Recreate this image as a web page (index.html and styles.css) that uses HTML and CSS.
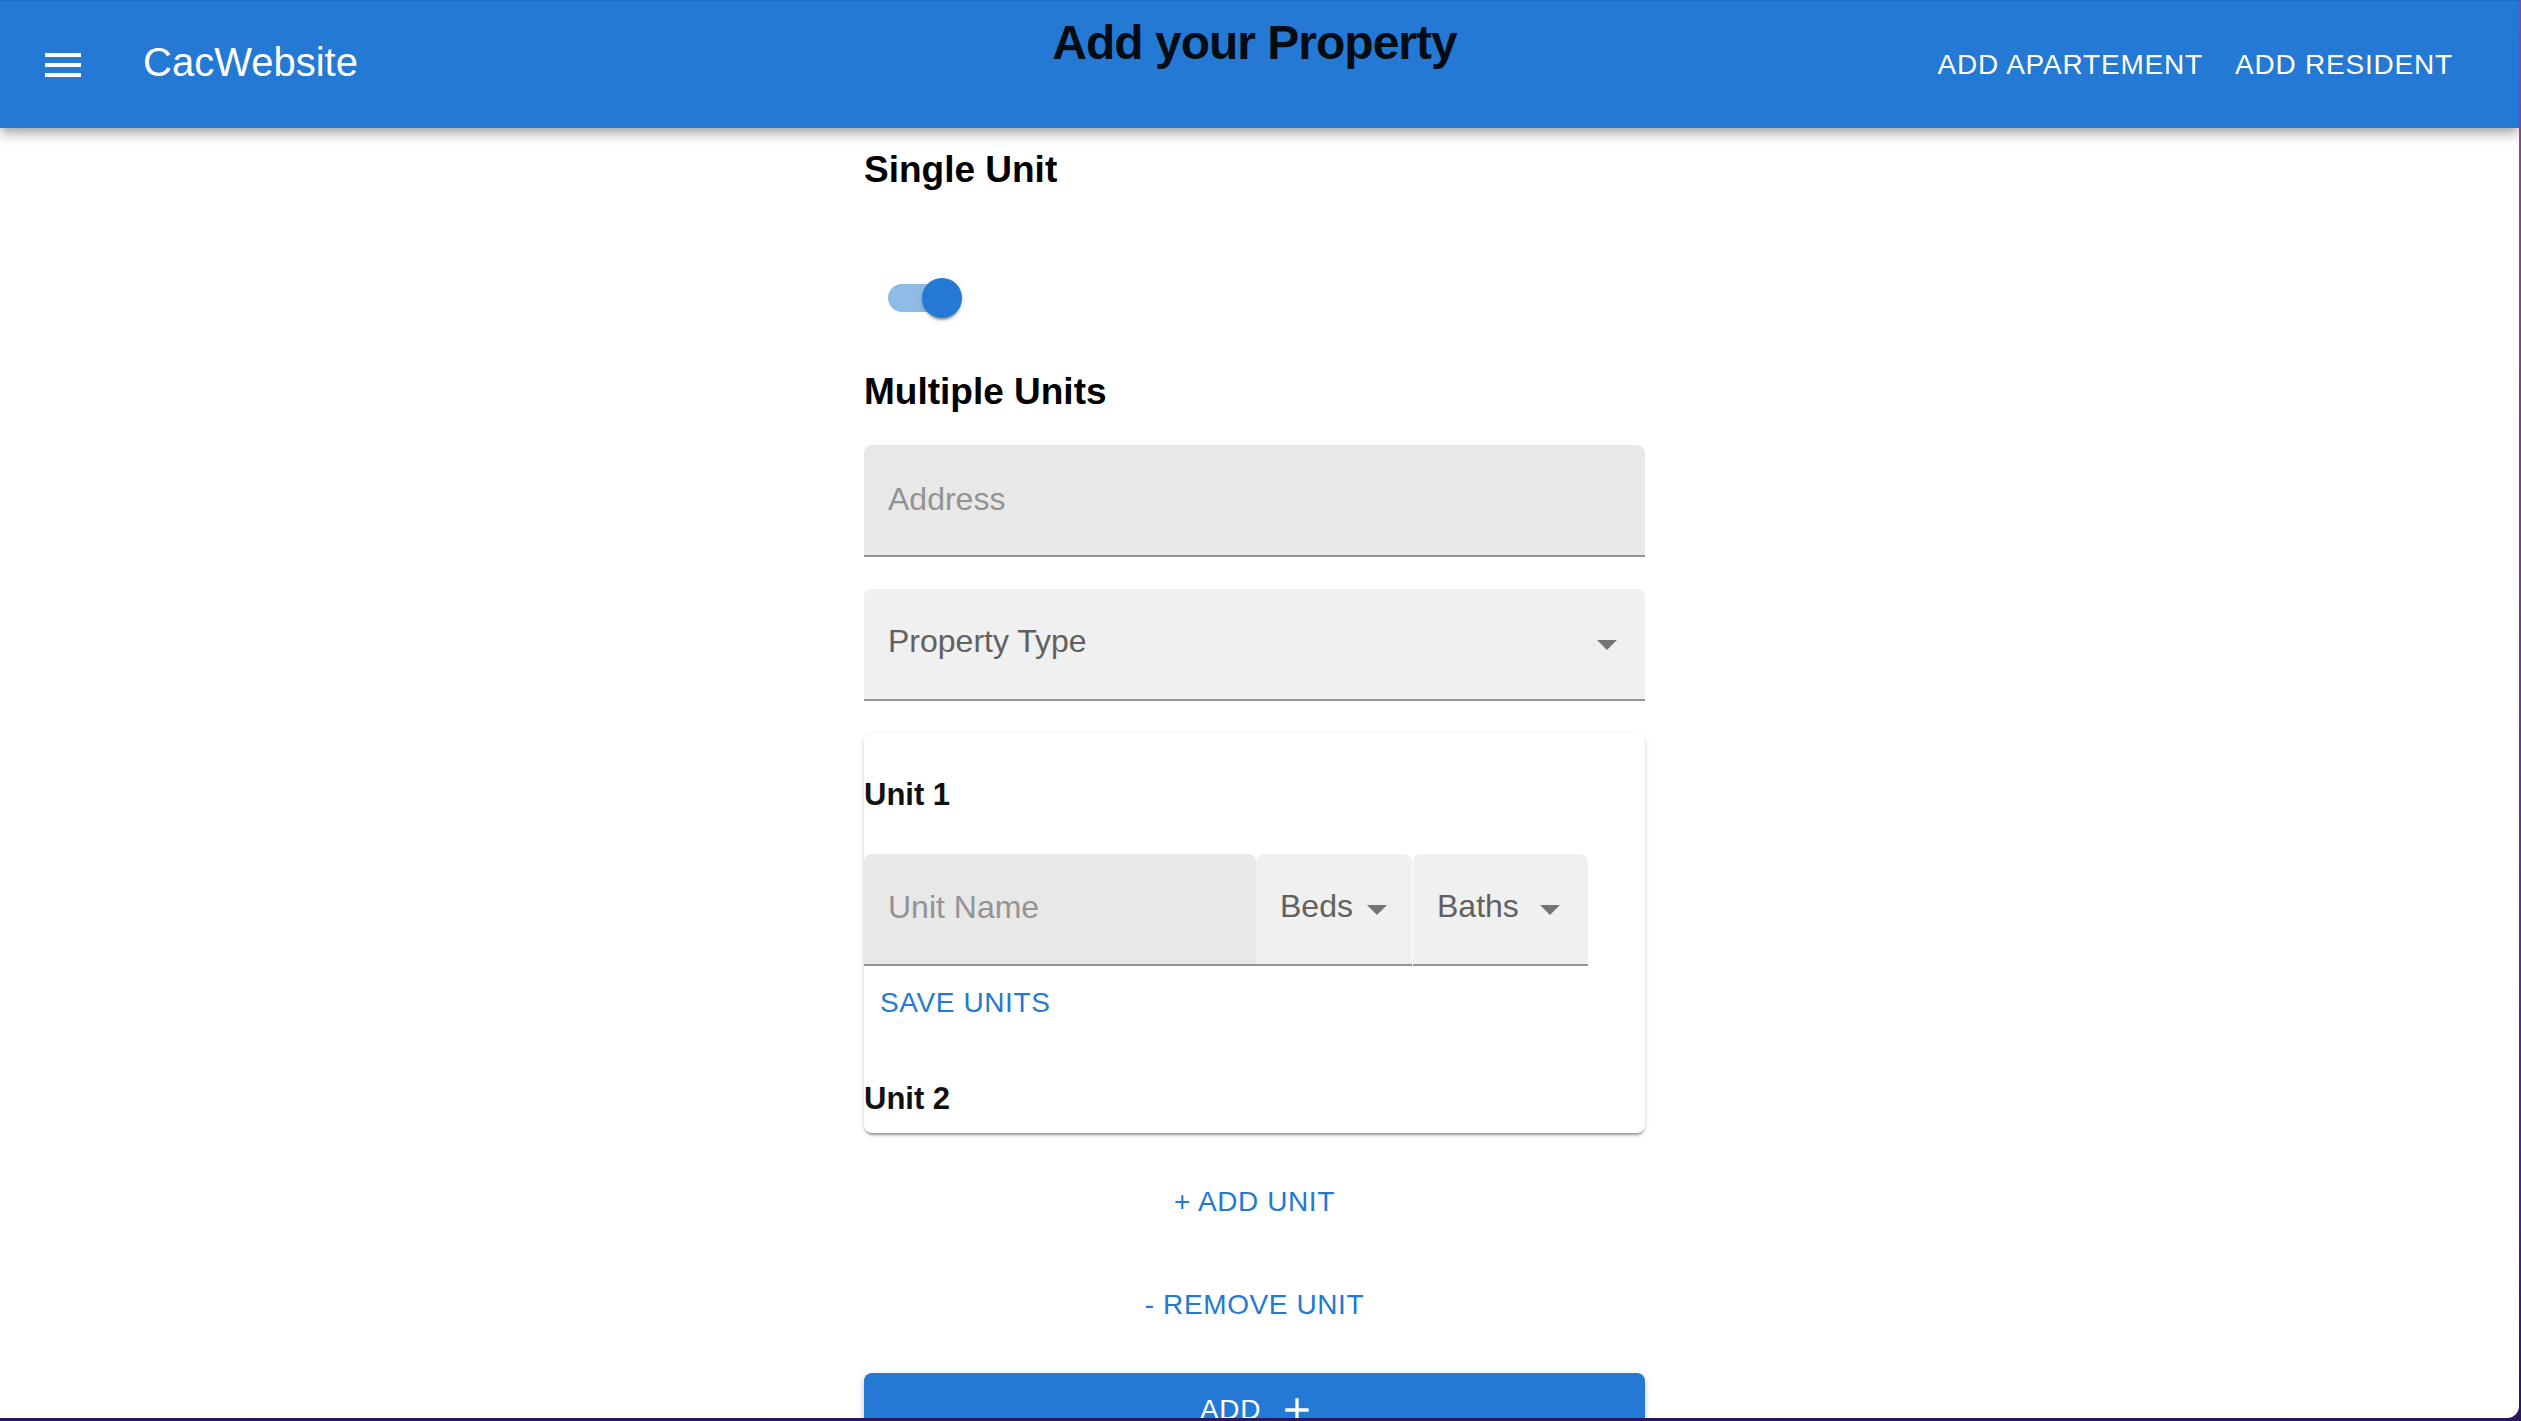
FILE: index.html
```html
<!DOCTYPE html>
<html lang="en">
<head>
<meta charset="utf-8">
<title>CacWebsite - Add your Property</title>
<link rel="stylesheet" href="styles.css">
</head>
<body>
<div class="window">
  <header class="appbar">
    <div class="toolbar">
      <button class="icon-btn" aria-label="menu">
        <svg viewBox="0 0 24 24" width="48" height="48"><path d="M3 18h18v-2H3v2zm0-5h18v-2H3v2zm0-7v2h18V6H3z" fill="#ffffff"/></svg>
      </button>
      <div class="brand">CacWebsite</div>
      <div class="spacer"></div>
      <nav class="nav">
        <a class="nav-btn">ADD APARTEMENT</a>
        <a class="nav-btn">ADD RESIDENT</a>
      </nav>
    </div>
    <h1 class="page-title">Add your Property</h1>
  </header>

  <main class="content">
    <div class="column">
      <h2 class="heading heading-single">Single Unit</h2>
      <div class="switch">
        <span class="switch-track"></span>
        <span class="switch-thumb"></span>
      </div>
      <h2 class="heading heading-multi">Multiple Units</h2>

      <div class="field field-input"><span class="placeholder">Address</span></div>
      <div class="field field-select">
        <span class="select-label">Property Type</span>
        <svg class="arrow" viewBox="0 0 24 24" width="48" height="48"><path d="M7 10l5 5 5-5z" fill="#757575"/></svg>
      </div>

      <section class="card">
        <h3 class="unit-title unit-first">Unit 1</h3>
        <div class="unit-row">
          <div class="cell cell-name"><span class="placeholder">Unit Name</span></div>
          <div class="cell cell-select cell-beds">
            <span class="select-label">Beds</span>
            <svg class="arrow" viewBox="0 0 24 24" width="48" height="48"><path d="M7 10l5 5 5-5z" fill="#757575"/></svg>
          </div>
          <div class="cell cell-select cell-baths">
            <span class="select-label">Baths</span>
            <svg class="arrow" viewBox="0 0 24 24" width="48" height="48"><path d="M7 10l5 5 5-5z" fill="#757575"/></svg>
          </div>
        </div>
        <button class="text-btn save-btn">SAVE UNITS</button>
        <h3 class="unit-title unit-second">Unit 2</h3>
      </section>

      <button class="text-btn center-btn add-unit">+ ADD UNIT</button>
      <button class="text-btn center-btn remove-unit">- REMOVE UNIT</button>

      <button class="add-btn">ADD
        <svg viewBox="0 0 24 24" width="40" height="40"><path d="M19 13h-6v6h-2v-6H5v-2h6V5h2v6h6v2z" fill="#ffffff"/></svg>
      </button>
    </div>
  </main>
</div>
</body>
</html>
```

FILE: styles.css
```css
html, body {
  margin: 0;
  padding: 0;
  width: 100%;
  height: 100%;
  overflow: hidden;
}

body {
  background: linear-gradient(180deg, #8e4a86 0%, #7a3a8c 45%, #4b1e9c 85%, #2a1660 100%);
  font-family: "Liberation Sans", Arial, Helvetica, sans-serif;
}

.window {
  width: 2519px;
  height: 1418px;
  overflow: hidden;
  background: #ffffff;
  border-bottom-right-radius: 12px;
}

/* ---------- App bar ---------- */
.appbar {
  position: relative;
  height: 128px;
  box-sizing: border-box;
  background: #2379d3;
  border-top: 1px solid #1c6dc4;
  box-shadow: 0 4px 8px -2px rgba(0,0,0,0.2), 0 8px 10px 0 rgba(0,0,0,0.14), 0 2px 20px 0 rgba(0,0,0,0.12);
  z-index: 2;
}

.toolbar {
  height: 127px;
  display: flex;
  align-items: center;
  padding: 0 50px 0 15px;
}

.icon-btn {
  display: flex;
  padding: 24px;
  margin: 0 32px 0 0;
  border: 0;
  background: none;
}

.brand {
  color: #ffffff;
  font-size: 40px;
  line-height: 64px;
  font-weight: 400;
  margin-bottom: 6px;
}

.spacer {
  flex: 1;
}

.nav {
  display: flex;
}

.nav-btn {
  color: #ffffff;
  font-size: 28px;
  line-height: 49px;
  letter-spacing: 0.8px;
  padding: 12px 16px;
}

.page-title {
  position: absolute;
  left: 0;
  top: 18px;
  width: 2509px;
  margin: 0;
  text-align: center;
  font-size: 48px;
  line-height: 48px;
  font-weight: 700;
  letter-spacing: -1px;
  color: rgba(0,0,0,0.92);
}

/* ---------- Content ---------- */
.content {
  width: 2509px;
}

.column {
  width: 781px;
  margin: 0 auto;
  display: flex;
  flex-direction: column;
}

.heading {
  margin: 0;
  font-size: 37px;
  line-height: 43px;
  font-weight: 700;
  color: #000000;
}

.heading-single {
  margin-top: 20px;
}

.heading-multi {
  margin-top: 34px;
}

.switch {
  position: relative;
  width: 116px;
  height: 76px;
  margin-top: 69px;
}

.switch-track {
  display: block;
  width: 68px;
  height: 28px;
  margin: 24px;
  border-radius: 14px;
  background: #8fbbe9;
}

.switch-thumb {
  position: absolute;
  left: 58px;
  top: 18px;
  width: 40px;
  height: 40px;
  border-radius: 50%;
  background: #2379d3;
  box-shadow: 0 4px 2px -2px rgba(0,0,0,0.2), 0 2px 2px 0 rgba(0,0,0,0.14), 0 2px 6px 0 rgba(0,0,0,0.12);
}

.field {
  height: 112px;
  box-sizing: border-box;
  display: flex;
  align-items: center;
  padding: 0 14px 0 24px;
  border-radius: 8px 8px 0 0;
  border-bottom: 2px solid #949494;
  font-size: 32px;
}

.field-input {
  margin-top: 32px;
  background: #e8e8e8;
}

.field-select {
  margin-top: 32px;
  background: #f0f0f0;
}

.placeholder {
  color: #939393;
  margin-bottom: 1px;
}

.cell-name .placeholder {
  margin-bottom: 3px;
}

.select-label {
  color: #616161;
  margin-bottom: 5px;
}

.arrow {
  margin-left: auto;
  flex: none;
}

/* ---------- Card ---------- */
.card {
  margin-top: 33px;
  padding-bottom: 16px;
  background: #ffffff;
  border-radius: 8px;
  box-shadow: 0 4px 2px -2px rgba(0,0,0,0.2), 0 2px 2px 0 rgba(0,0,0,0.14), 0 2px 6px 0 rgba(0,0,0,0.12);
  display: flex;
  flex-direction: column;
  align-items: flex-start;
}

.unit-title {
  margin: 0;
  font-size: 31px;
  line-height: 36px;
  font-weight: 700;
  color: #111111;
}

.unit-first {
  margin-top: 43px;
}

.unit-second {
  margin-top: 42px;
}

.unit-row {
  display: flex;
  margin-top: 41px;
  height: 112px;
  font-size: 32px;
}

.cell {
  box-sizing: border-box;
  height: 112px;
  display: flex;
  align-items: center;
  padding-left: 24px;
  border-radius: 8px 8px 0 0;
  border-bottom: 2px solid #949494;
}

.cell-name {
  width: 392px;
  background: #e8e8e8;
}

.cell-select {
  background: #f0f0f0;
  padding-right: 14px;
}

.cell-beds {
  width: 156px;
}

.cell-baths {
  width: 175px;
  margin-left: 1px;
}

.text-btn {
  border: 0;
  background: none;
  font-family: "Liberation Sans", Arial, Helvetica, sans-serif;
  font-size: 28px;
  line-height: 49px;
  letter-spacing: 0.6px;
  padding: 12px 16px;
  color: #2379d3;
}

.center-btn {
  align-self: center;
}

.add-unit {
  margin-top: 32px;
}

.remove-unit {
  margin-top: 30px;
}

.add-btn {
  margin-top: 32px;
  display: flex;
  align-items: center;
  justify-content: center;
  border: 0;
  border-radius: 8px;
  background: #2379d3;
  color: #ffffff;
  font-family: "Liberation Sans", Arial, Helvetica, sans-serif;
  font-size: 28px;
  line-height: 49px;
  letter-spacing: 0.6px;
  padding: 12px 32px;
  box-shadow: 0 6px 2px -4px rgba(0,0,0,0.2), 0 4px 4px 0 rgba(0,0,0,0.14), 0 2px 10px 0 rgba(0,0,0,0.12);
}

.add-btn svg {
  margin-left: 16px;
  margin-right: -8px;
}
```
